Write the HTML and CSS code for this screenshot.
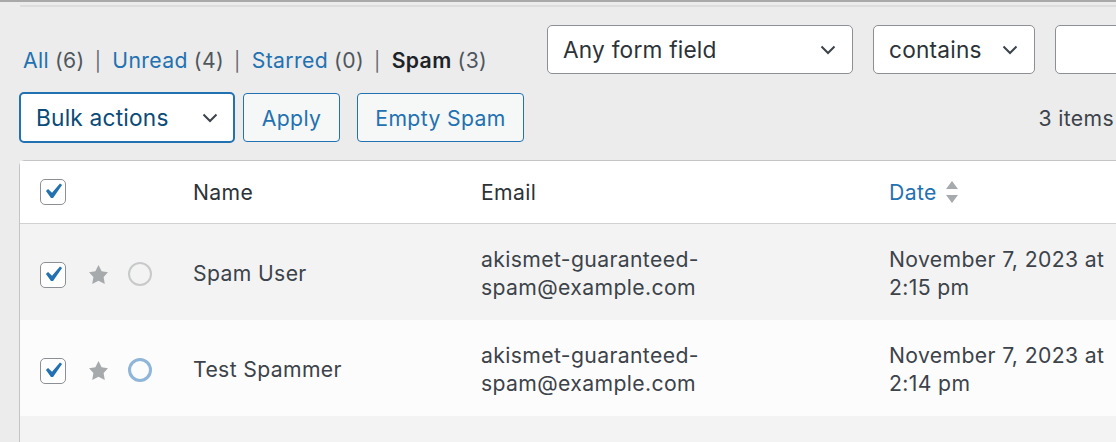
FILE: index.html
```html
<!DOCTYPE html>
<html>
<head>
<meta charset="utf-8">
<link rel="stylesheet" href="styles.css">
</head>
<body>
<div class="topline"></div>
<div class="subline"></div>
<div class="wrap">
  <div class="toprow">
    <ul class="views">
      <li><a class="lnk">All</a> <span class="cnt">(6)</span><span class="sep">|</span></li>
      <li><a class="lnk">Unread</a> <span class="cnt">(4)</span><span class="sep">|</span></li>
      <li><a class="lnk">Starred</a> <span class="cnt">(0)</span><span class="sep">|</span></li>
      <li><b class="cur">Spam</b> <span class="cnt">(3)</span></li>
    </ul>
    <div class="search">
      <div class="select field"><span>Any form field</span><svg class="chev" viewBox="0 0 16 10"><polyline points="1.5,1.5 8,8 14.5,1.5"/></svg></div>
      <div class="select op"><span>contains</span><svg class="chev" viewBox="0 0 16 10"><polyline points="1.5,1.5 8,8 14.5,1.5"/></svg></div>
      <div class="input"></div>
    </div>
  </div>
  <div class="tablenav">
    <div class="select bulk"><span>Bulk actions</span><svg class="chev" viewBox="0 0 16 10"><polyline points="1.5,1.5 8,8 14.5,1.5"/></svg></div>
    <div class="btn apply">Apply</div>
    <div class="btn empty">Empty Spam</div>
    <div class="count">3 items</div>
  </div>
  <div class="table">
    <div class="row head">
      <div class="c-check"><span class="cb"><svg viewBox="0 0 20 20"><path d="M14.83 4.89l1.34.94-5.81 8.38H9.02L5.78 9.67l1.34-1.25 2.57 2.4z"/></svg></span></div>
      <div class="c-name">Name</div>
      <div class="c-email">Email</div>
      <div class="c-date"><a class="lnk">Date</a><svg class="sort" viewBox="0 0 14 24"><path d="M7 1l6 8H1z"/><path d="M7 23l6-8H1z"/></svg></div>
    </div>
    <div class="row alt">
      <div class="c-check"><span class="cb"><svg viewBox="0 0 20 20"><path d="M14.83 4.89l1.34.94-5.81 8.38H9.02L5.78 9.67l1.34-1.25 2.57 2.4z"/></svg></span>
        <svg class="star" viewBox="0 0 20 20"><path d="M10 1l3 6 6 .75-4.12 4.62L16 19l-6-3-6 3 1.13-6.63L1 7.75 7 7z"/></svg>
        <span class="dot read"></span></div>
      <div class="c-name">Spam User</div>
      <div class="c-email">akismet-guaranteed-<br>spam@example.com</div>
      <div class="c-date">November 7, 2023 at<br>2:15 pm</div>
    </div>
    <div class="row">
      <div class="c-check"><span class="cb"><svg viewBox="0 0 20 20"><path d="M14.83 4.89l1.34.94-5.81 8.38H9.02L5.78 9.67l1.34-1.25 2.57 2.4z"/></svg></span>
        <svg class="star" viewBox="0 0 20 20"><path d="M10 1l3 6 6 .75-4.12 4.62L16 19l-6-3-6 3 1.13-6.63L1 7.75 7 7z"/></svg>
        <span class="dot unread"></span></div>
      <div class="c-name">Test Spammer</div>
      <div class="c-email">akismet-guaranteed-<br>spam@example.com</div>
      <div class="c-date">November 7, 2023 at<br>2:14 pm</div>
    </div>
    <div class="row alt last"></div>
  </div>
</div>
</body>
</html>
```
FILE: styles.css
```css
html, body {
  margin: 0;
  padding: 0;
}
body {
  width: 1116px;
  height: 442px;
  overflow: hidden;
  background: #ececec;
  font-family: Inter, "Noto Sans", sans-serif;
  font-size: 21.2px;
  letter-spacing: 0.36px;
  color: #3c434a;
}
.topline {
  height: 2px;
  background: #a9a9a9;
}
.subline {
  height: 2px;
  margin: 3px 0 0 20px;
  background: #dddddd;
}
.wrap {
  padding-left: 19px;
  width: 1300px;
}
.toprow {
  display: flex;
  align-items: flex-start;
  margin-top: 18px;
}
.views {
  list-style: none;
  margin: 0;
  padding: 22px 0 0 4px;
  width: 524px;
  display: flex;
  white-space: nowrap;
}
.views li {
  display: flex;
  align-items: baseline;
}
.lnk {
  color: #2271b1;
}
.cur {
  color: #1d2327;
  font-weight: 600;
}
.cnt {
  color: #50575e;
  margin-left: 6px;
}
.sep {
  color: #646970;
  margin: 0 11px 0 10px;
  font-size: 19px;
}
.search {
  display: flex;
  gap: 20px;
}
.select {
  box-sizing: border-box;
  height: 49px;
  background: #fff;
  border: 1px solid #8c8f94;
  border-radius: 5px;
  display: flex;
  align-items: center;
  justify-content: space-between;
  padding: 0 16px 0 15px;
  color: #2c3338;
  font-size: 22.7px;
  letter-spacing: 0.2px;
}
.chev {
  width: 16px;
  height: 10px;
  fill: none;
  stroke: #3c434a;
  stroke-width: 2;
}
.select.field { width: 306px; }
.select.op { width: 162px; }
.input {
  box-sizing: border-box;
  width: 200px;
  height: 49px;
  background: #fff;
  border: 1px solid #8c8f94;
  border-radius: 5px;
}
.tablenav {
  display: flex;
  align-items: center;
  margin-top: 18px;
  width: 1095px;
  height: 51px;
}
.select.bulk {
  width: 216px;
  height: 51px;
  border: 2px solid #2271b1;
  color: #0a4b78;
  padding: 0 15px 0 15px;
}
.btn {
  box-sizing: border-box;
  height: 49px;
  border: 1px solid #2271b1;
  border-radius: 4px;
  background: #f6f7f7;
  color: #2271b1;
  display: flex;
  align-items: center;
  justify-content: center;
}
.btn.apply { width: 97px; margin-left: 8px; }
.btn.empty { width: 167px; margin-left: 17px; }
.count {
  margin-left: auto;
  color: #3c434a;
}
.table {
  margin-top: 17px;
  width: 1200px;
  background: #fff;
  border: 1px solid #c3c4c7;
  border-top-left-radius: 6px;
}
.row {
  display: grid;
  grid-template-columns: 173px 288px 408px 1fr;
  align-items: center;
  height: 96px;
  box-sizing: border-box;
  padding-top: 2px;
  background: #fcfcfc;
  line-height: 28px;
}
.row.alt { background: #f3f3f3; }
.row.head {
  height: 63px;
  padding-top: 0;
  background: #fff;
  border-bottom: 1px solid #d0d1d3;
  color: #2c3338;
}
.row.last { height: 40px; }
.c-check {
  display: flex;
  align-items: center;
  padding-left: 20px;
}
.row:not(.head) .c-check { padding-top: 4px; }
.cb {
  box-sizing: border-box;
  width: 26px;
  height: 26px;
  border: 1.5px solid #8c8f94;
  border-radius: 5px;
  background: #fff;
  position: relative;
}
.cb svg {
  position: absolute;
  left: -4px;
  top: -4px;
  width: 31px;
  height: 31px;
  fill: #2271b1;
}
.star {
  width: 21px;
  height: 21px;
  fill: #a7aaad;
  margin-left: 22px;
  margin-top: -2px;
}
.dot {
  box-sizing: border-box;
  width: 24px;
  height: 24px;
  border-radius: 50%;
  margin-left: 19px;
  margin-top: -3px;
}
.dot.read { border: 2px solid #c8c9cb; }
.dot.unread { border: 3.5px solid #8fb5d8; }
.c-date {
  display: flex;
  align-items: center;
}
.row:not(.head) .c-date { display: block; }
.sort {
  width: 14px;
  height: 24px;
  fill: #a7aaad;
  margin-left: 8px;
}
```
